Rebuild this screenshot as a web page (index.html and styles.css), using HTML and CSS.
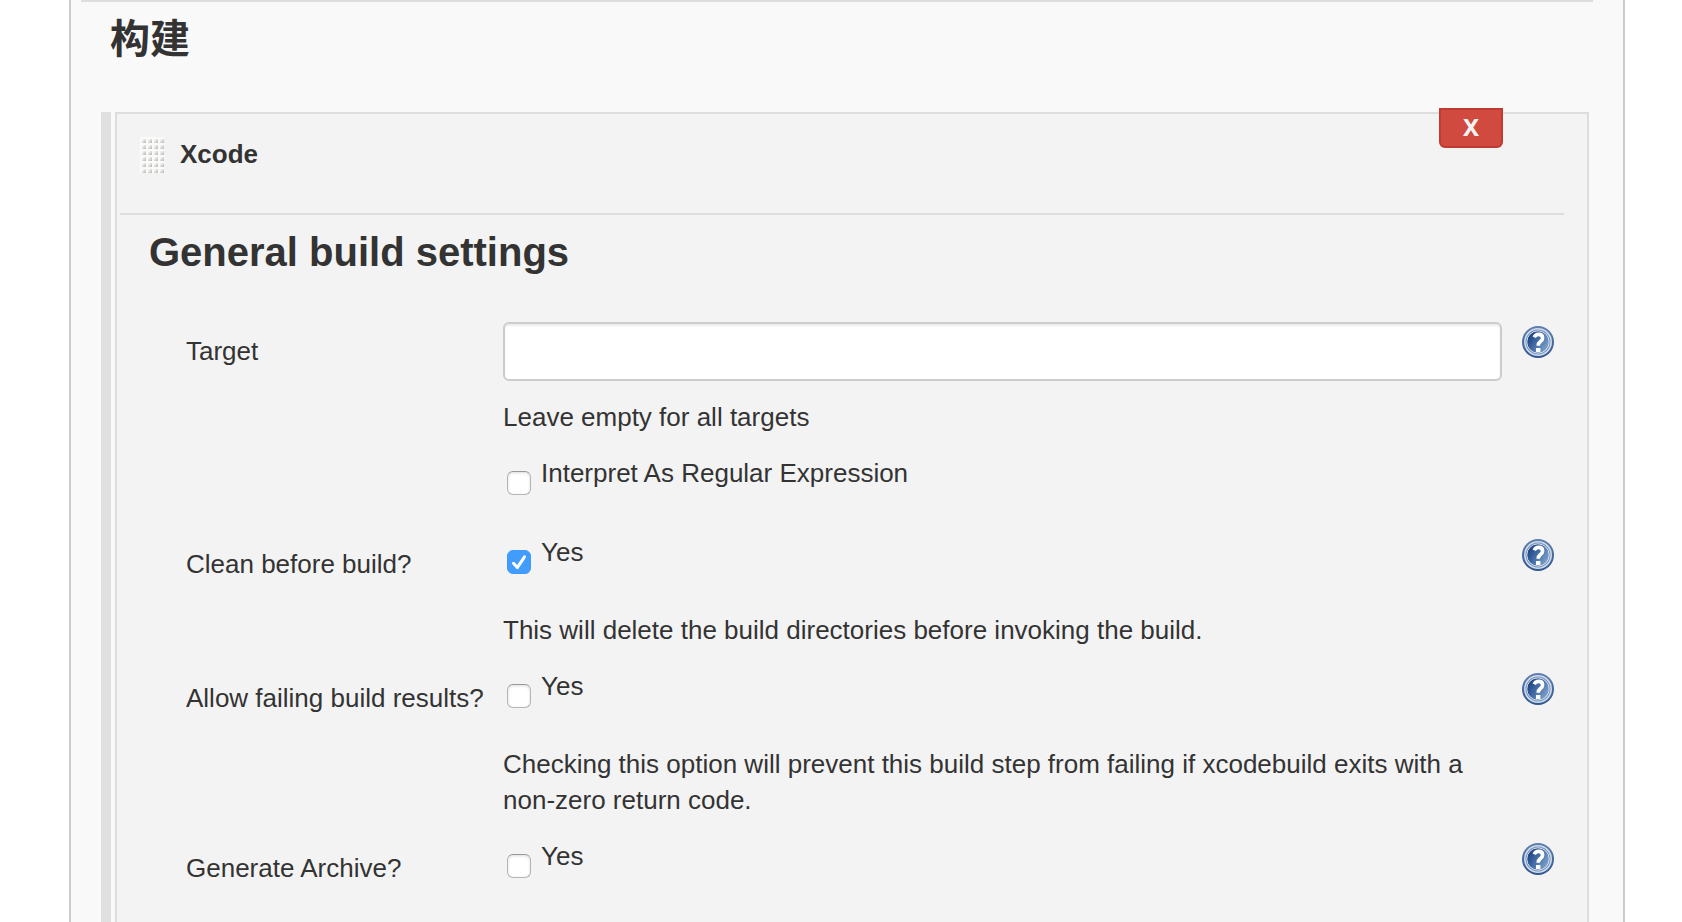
FILE: index.html
```html
<!DOCTYPE html>
<html lang="zh-CN">
<head>
<meta charset="utf-8">
<title>构建</title>
<link rel="stylesheet" href="styles.css">
</head>
<body>
<svg class="defs" aria-hidden="true">
  <defs>
    <linearGradient id="disc" x1="0" y1="0.2" x2="1" y2="0.8">
      <stop offset="0.1" stop-color="#1f4684"/>
      <stop offset="0.5" stop-color="#4a72a9"/>
      <stop offset="1" stop-color="#86a8d0"/>
    </linearGradient>
    <linearGradient id="rim" x1="0" y1="0" x2="0" y2="1">
      <stop offset="0" stop-color="#5f80b0"/>
      <stop offset="1" stop-color="#2f578f"/>
    </linearGradient>
    <symbol id="help" viewBox="0 0 32 32">
      <circle cx="16" cy="16" r="16" fill="url(#rim)"/>
      <circle cx="16" cy="16" r="13.2" fill="#6f8fbc" stroke="#cfdaea" stroke-width="1.6"/>
      <circle cx="16" cy="16" r="11.2" fill="url(#disc)" stroke="#d6e0ee" stroke-width="1"/>
      <path d="M12.2 11.2Q13.5 8.4 16.5 8.4Q20.6 8.4 20.6 11.9Q20.6 14 18.2 15.7Q16.2 17.2 16.2 19.8" fill="none" stroke="#fff" stroke-width="3.6"/>
      <rect x="14" y="22" width="4.4" height="4" fill="#fff"/>
    </symbol>
    <linearGradient id="dot" x1="0" y1="0" x2="1" y2="1">
      <stop offset="0.2" stop-color="#f4f4f2"/>
      <stop offset="1" stop-color="#b4b4b1"/>
    </linearGradient>
    <pattern id="grip" width="6" height="6" patternUnits="userSpaceOnUse">
      <rect width="6" height="6" fill="#fafaf9"/>
      <rect x="2" y="2" width="4" height="4" fill="url(#dot)"/>
    </pattern>
  </defs>
</svg>
<main class="panel">
  <h2 class="section-title">构建</h2>
  <div class="builder">
    <div class="builder-bar"></div>
    <section class="chunk">
      <button class="delete" type="button">X</button>
      <header class="chunk-head">
        <svg class="grip" viewBox="0 0 24 36" aria-hidden="true"><rect width="24" height="36" fill="url(#grip)"/></svg>
        <b>Xcode</b>
      </header>
      <h3 class="group-title">General build settings</h3>
      <form class="settings">
        <div class="row">
          <label class="name" for="target">Target</label>
          <div class="field"><input class="text" id="target" type="text"></div>
          <a class="help" href="#" aria-label="Help: Target"><svg><use href="#help"/></svg></a>
          <p class="note">Leave empty for all targets</p>
        </div>
        <div class="row">
          <label class="control"><span class="tick"><input type="checkbox"></span>Interpret As Regular Expression</label>
        </div>
        <div class="row">
          <label class="name" for="clean">Clean before build?</label>
          <label class="control"><span class="tick"><input id="clean" type="checkbox" checked><svg class="mark" viewBox="0 0 24 24" aria-hidden="true"><path d="M6.5 13.3L10.3 17.6L17.5 6.8"/></svg></span>Yes</label>
          <a class="help" href="#" aria-label="Help: Clean before build"><svg><use href="#help"/></svg></a>
          <p class="note">This will delete the build directories before invoking the build.</p>
        </div>
        <div class="row">
          <label class="name" for="failing">Allow failing build results?</label>
          <label class="control"><span class="tick"><input id="failing" type="checkbox"></span>Yes</label>
          <a class="help" href="#" aria-label="Help: Allow failing build results"><svg><use href="#help"/></svg></a>
          <p class="note">Checking this option will prevent this build step from failing if xcodebuild exits with a non-zero return code.</p>
        </div>
        <div class="row">
          <label class="name" for="archive">Generate Archive?</label>
          <label class="control"><span class="tick"><input id="archive" type="checkbox"></span>Yes</label>
          <a class="help" href="#" aria-label="Help: Generate Archive"><svg><use href="#help"/></svg></a>
        </div>
      </form>
    </section>
  </div>
</main>
</body>
</html>
```

FILE: styles.css
```css
* {
  box-sizing: border-box;
}

body {
  margin: 0;
  background: #fff;
  color: #333;
  font: 26px/36px "Liberation Sans", "Noto Sans CJK SC", sans-serif;
}

.defs {
  position: absolute;
  width: 0;
  height: 0;
}

.panel {
  display: flex;
  flex-direction: column;
  min-height: 100vh;
  margin: 0 57px 0 69px;
  border: solid #ccc;
  border-width: 0 2px;
  background: #f9f9f9;
}

.section-title,
.group-title {
  margin: 0;
  font-size: 40px;
  line-height: 48px;
  font-weight: 700;
}

.section-title {
  margin: 0 30px 0 10px;
  padding: 13px 29px 49px;
  border-top: 2px solid #ddd;
}

.builder {
  display: flex;
  flex: 1;
  gap: 4px;
  margin: 0 34px 0 30px;
}

.builder-bar {
  width: 10px;
  background: #e0e0e0;
}

.chunk {
  position: relative;
  flex: 1;
  border: 2px solid #ddd;
  border-bottom: 0;
  background: #f3f3f3;
}

.delete {
  position: absolute;
  top: -6px;
  right: 84px;
  width: 64px;
  height: 40px;
  padding: 0 0 2px;
  border: 2px solid #bf3a30;
  border-radius: 0 0 6px 6px;
  background: #d14a3f;
  color: #f3f3f3;
  font: 700 24px/32px "Noto Sans", sans-serif;
}

.chunk-head {
  display: flex;
  gap: 16px;
  margin: 0 23px 0 3px;
  padding: 22px 20px 40px;
  border-bottom: 2px solid #ddd;
}

.grip {
  width: 24px;
  height: 36px;
  margin-top: 1px;
}

.group-title {
  padding: 13px 32px 44px;
}

.settings {
  padding: 0 33px 0 69px;
}

.row {
  display: grid;
  grid-template-columns: 317px 1fr 52px;
  grid-template-rows: 79px;
}

.name {
  padding-top: 13px;
}

.field,
.control,
.note {
  grid-column: 2;
}

.control {
  padding-top: 1px;
}

.text {
  display: block;
  width: 100%;
  height: 59px;
  margin-top: 2px;
  padding: 8px 12px;
  border: 2px solid #ccc;
  border-radius: 6px;
  background: #fff;
  box-shadow: inset 0 2px 2px rgba(0, 0, 0, 0.08);
  font: inherit;
  color: inherit;
}

.tick {
  display: inline-grid;
  margin: 16px 10px 0 4px;
  vertical-align: top;
}

.tick > * {
  grid-area: 1 / 1;
}

.tick input {
  appearance: none;
  width: 24px;
  height: 24px;
  margin: 0;
  border: 1px solid #b4b4b4;
  border-top-color: #999;
  border-radius: 6px;
  background: #fff;
  box-shadow: inset 0 1px 3px rgba(0, 0, 0, 0.14);
}

.tick input:checked {
  border-color: #3f99fa;
  background: #429cfb;
  box-shadow: none;
}

.mark {
  width: 24px;
  height: 24px;
  fill: none;
  stroke: #fff;
  stroke-width: 3;
  stroke-linecap: round;
  stroke-linejoin: round;
  pointer-events: none;
}

.help {
  grid-column: 3;
  justify-self: end;
  height: 32px;
  margin-top: 6px;
}

.help svg {
  display: block;
  width: 32px;
  height: 32px;
}

.note {
  margin: 0 0 19px;
}
```
